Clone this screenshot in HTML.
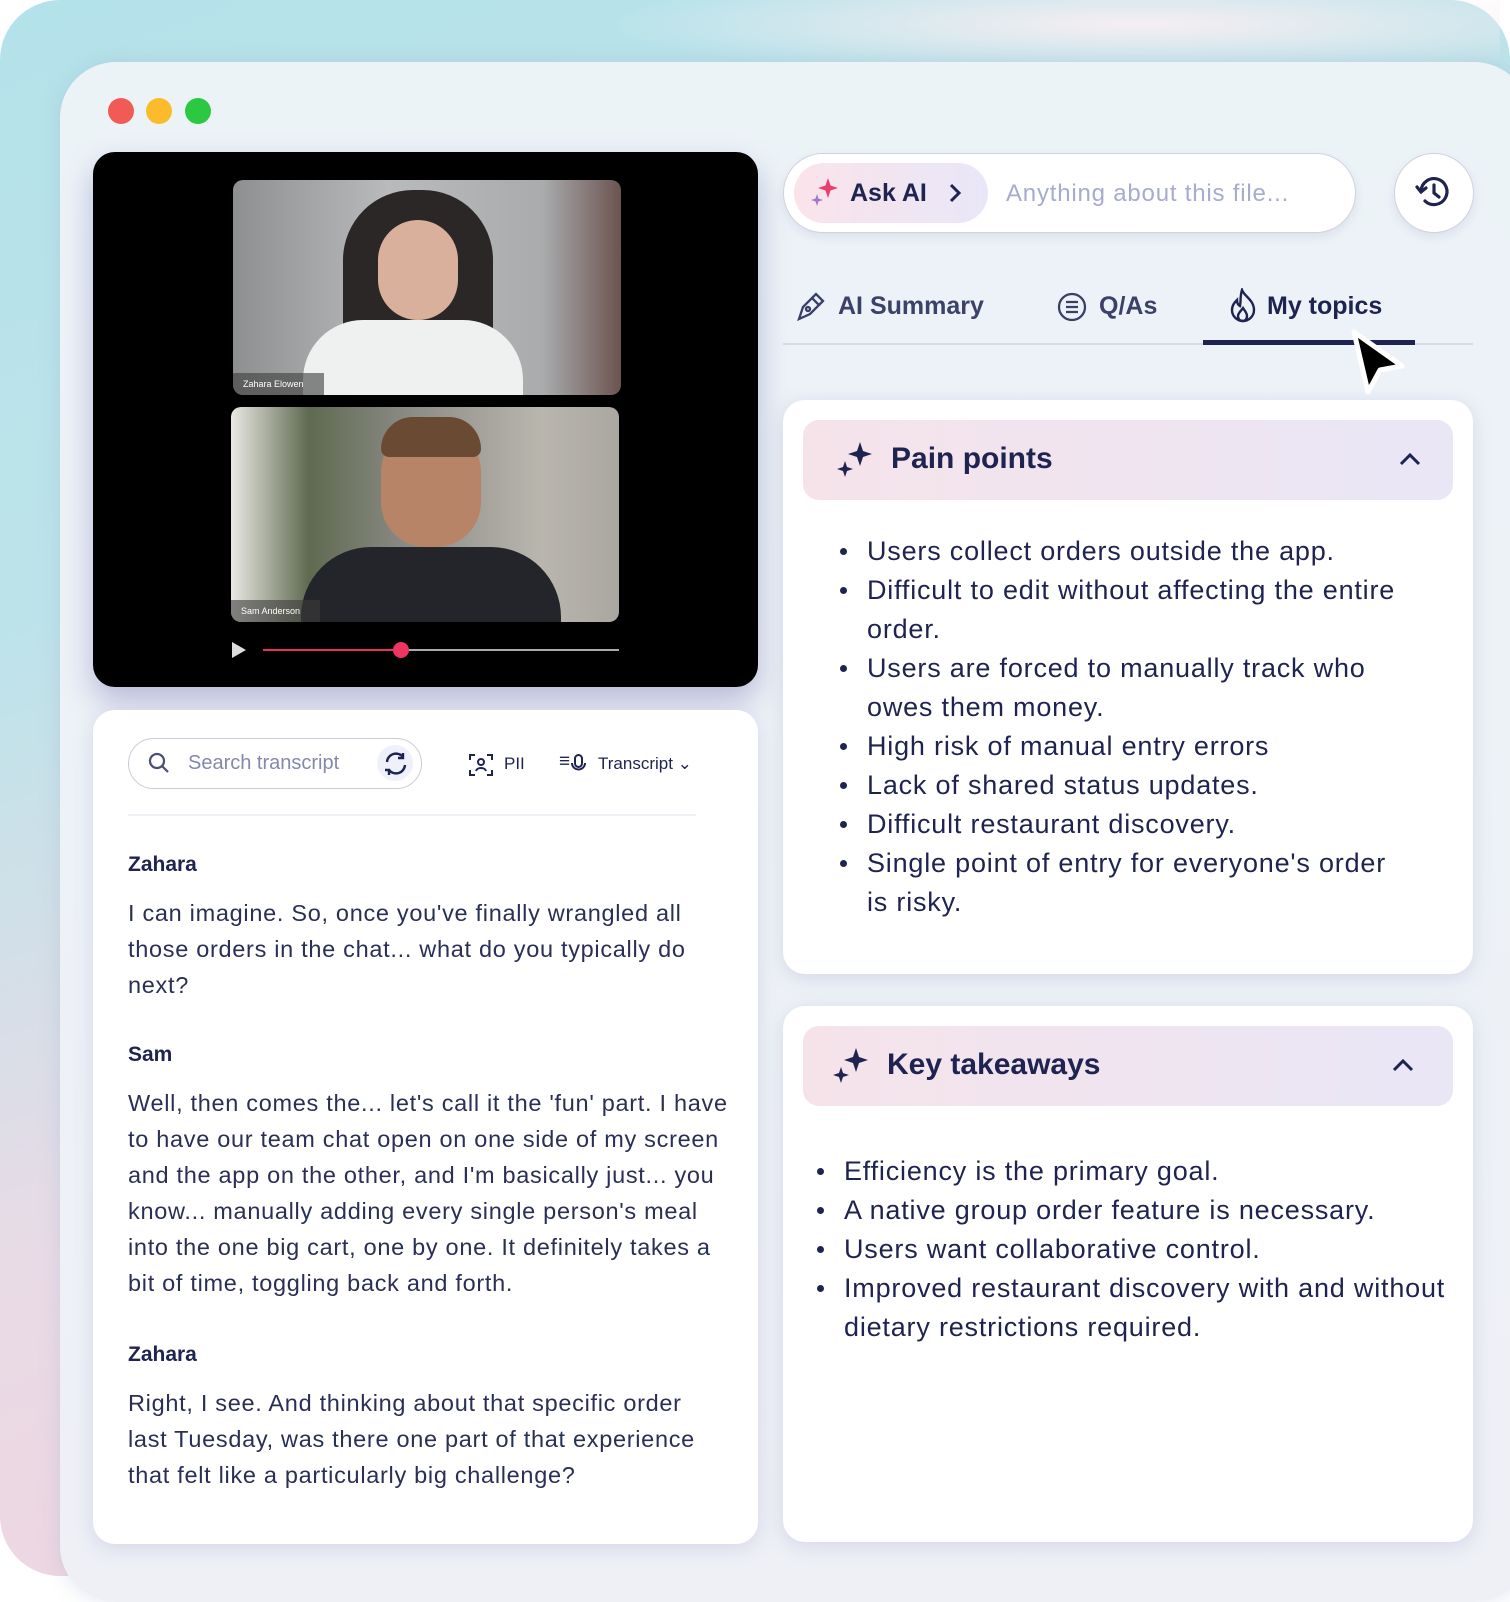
<!DOCTYPE html>
<html><head><meta charset="utf-8"><style>
*{box-sizing:border-box;margin:0;padding:0}
body{width:1510px;height:1576px;overflow:hidden;background:#fff;font-family:"Liberation Sans",sans-serif;color:#1e2350;position:relative}
.bg{position:absolute;left:0;top:0;width:1510px;height:1576px;border-radius:60px;background:linear-gradient(160deg,#b4e2ea 0%,#bde3ea 30%,#e9dbe6 60%,#f3cfd9 100%)}
.bg2{position:absolute;left:600px;top:0;width:900px;height:80px;background:radial-gradient(ellipse at 60% 30%,#f6eef2 0%,rgba(246,238,242,0) 70%)}
.win{position:absolute;left:60px;top:62px;width:1470px;height:1540px;border-radius:56px;background:linear-gradient(180deg,#ecf3f7,#eef0f6);box-shadow:0 0 20px rgba(150,170,200,.3)}
.dot{position:absolute;top:98px;width:26px;height:26px;border-radius:50%}
.abs{position:absolute}
.card{background:#fff;border-radius:22px;box-shadow:0 4px 18px rgba(140,140,190,.25)}
.video{left:93px;top:152px;width:665px;height:535px;background:#000;border-radius:22px;box-shadow:0 14px 30px rgba(120,120,180,.45)}
.ph{position:absolute;border-radius:10px;overflow:hidden}
.tag{position:absolute;left:0;bottom:0;background:rgba(60,60,60,.6);color:#fff;font-size:9px;padding:6px 20px 6px 10px}
.li{position:relative;padding-left:27px;margin-bottom:0}
.li:before{content:"";position:absolute;left:0;top:16px;width:7px;height:7px;border-radius:50%;background:#1e2350}
.hdr{position:absolute;left:20px;right:20px;top:20px;height:80px;border-radius:16px;background:linear-gradient(90deg,#f6e3ea,#e9e6f6)}
.hdr span{position:absolute;left:88px;top:22px;font-size:30px;font-weight:bold}
.tr p{font-size:23.5px;line-height:36px;color:#2a2f55;letter-spacing:.7px}
.tr h4{font-size:21px;font-weight:bold;margin:0 0 18px}
.list{font-size:27px;line-height:39px;letter-spacing:.8px}
</style></head><body>
<div class="bg"></div><div class="bg2"></div>
<div class="win"></div>
<div class="dot" style="left:108px;background:#f25a55"></div>
<div class="dot" style="left:146px;background:#fbbb2b"></div>
<div class="dot" style="left:185px;background:#2cc842"></div>

<div class="abs video">
 <div class="ph" style="left:140px;top:28px;width:388px;height:215px;background:linear-gradient(90deg,#8e8f91,#b8babb 40%,#a9abad 80%,#6b5450)">
  <div class="abs" style="left:110px;top:10px;width:150px;height:190px;border-radius:70px 70px 30px 30px;background:#2c2727"></div>
  <div class="abs" style="left:145px;top:40px;width:80px;height:100px;border-radius:40px;background:#d9b09c"></div>
  <div class="abs" style="left:70px;top:140px;width:220px;height:90px;border-radius:60px 60px 0 0;background:#eef1f0"></div>
  <div class="tag">Zahara Elowen</div>
 </div>
 <div class="ph" style="left:138px;top:255px;width:388px;height:215px;background:linear-gradient(90deg,#eae8e3,#5f6a50 20%,#8a8a84 45%,#b9b6ae 80%,#aaa7a0)">
  <div class="abs" style="left:150px;top:20px;width:100px;height:120px;border-radius:45px;background:#b88468"></div>
  <div class="abs" style="left:150px;top:10px;width:100px;height:40px;border-radius:40px 40px 10px 10px;background:#6b4a33"></div>
  <div class="abs" style="left:70px;top:140px;width:260px;height:90px;border-radius:70px 70px 0 0;background:#23252b"></div>
  <div class="tag">Sam Anderson</div>
 </div>
 <svg class="abs" style="left:136px;top:488px" width="20" height="20"><path d="M3 2 L17 10 L3 18Z" fill="#ddd"/></svg>
 <div class="abs" style="left:170px;top:497px;width:140px;height:2px;background:#e8335f"></div>
 <div class="abs" style="left:310px;top:497px;width:216px;height:2px;background:#aaa"></div>
 <div class="abs" style="left:300px;top:490px;width:16px;height:16px;border-radius:50%;background:#ee3461"></div>
</div>

<div class="abs card tr" style="left:93px;top:710px;width:665px;height:834px">
 <div class="abs" style="left:35px;top:28px;width:294px;height:51px;border:1.5px solid #c9cbd6;border-radius:26px">
  <svg class="abs" style="left:18px;top:12px" width="24" height="24" fill="none" stroke="#4a4f73" stroke-width="2.2"><circle cx="10" cy="10" r="7"/><path d="M15 15l6 6"/></svg>
  <span class="abs" style="left:59px;top:13px;font-size:20px;color:#8489ac">Search transcript</span>
  <div class="abs" style="left:248px;top:6px;width:36px;height:36px;border-radius:50%;background:#eef0fa"></div>
  <svg class="abs" style="left:254px;top:12px" width="26" height="26" fill="none" stroke="#1e2350" stroke-width="2.4"><path d="M4 11a9 9 0 0 1 16-5M22 14a9 9 0 0 1-16 5"/><path d="M20 2v5h-5M6 24v-5h-4"/></svg>
 </div>
 <svg class="abs" style="left:375px;top:42px" width="26" height="26" fill="none" stroke="#1e2350" stroke-width="2"><path d="M2 8V3h5M19 3h5v5M24 18v5h-5M7 23H2v-5"/><circle cx="13" cy="10" r="3"/><path d="M8 19c1-4 9-4 10 0"/></svg>
 <span class="abs" style="left:411px;top:44px;font-size:17px">PII</span>
 <span class="abs" style="left:466px;top:41px;font-size:19px;font-weight:bold">≡</span>
 <svg class="abs" style="left:478px;top:43px" width="16" height="22" fill="none" stroke="#1e2350" stroke-width="2"><rect x="4" y="2" width="7" height="12" rx="3.5"/><path d="M1 10a6.5 6.5 0 0 0 13 0"/></svg>
 <span class="abs" style="left:505px;top:44px;font-size:17px">Transcript ⌄</span>
 <div class="abs" style="left:35px;top:104px;width:568px;height:2px;background:#eef0f5"></div>
 <div class="abs" style="left:35px;top:143px;width:600px">
  <h4>Zahara</h4>
  <p>I can imagine. So, once you've finally wrangled all those orders in the chat... what do you typically do next?</p>
  <h4 style="margin-top:40px">Sam</h4>
  <p>Well, then comes the... let's call it the 'fun' part. I have to have our team chat open on one side of my screen and the app on the other, and I'm basically just... you know... manually adding every single person's meal into the one big cart, one by one. It definitely takes a bit of time, toggling back and forth.</p>
  <h4 style="margin-top:42px">Zahara</h4>
  <p>Right, I see. And thinking about that specific order last Tuesday, was there one part of that experience that felt like a particularly big challenge?</p>
 </div>
</div>

<!-- Ask AI -->
<div class="abs" style="left:783px;top:153px;width:573px;height:80px;border-radius:40px;background:#fff;border:1.5px solid #d0d3de;box-shadow:0 4px 10px rgba(150,150,190,.2)"></div>
<div class="abs" style="left:794px;top:163px;width:194px;height:60px;border-radius:30px;background:linear-gradient(90deg,#fbe3ea,#e8e7f8)"></div>
<svg class="abs" style="left:808px;top:176px" width="34" height="34"><path d="M20 2l2.5 7.5 7.5 2.5-7.5 2.5L20 22l-2.5-7.5L10 12l7.5-2.5z" fill="#e8406c"/><path d="M9 18l1.5 4.5L15 24l-4.5 1.5L9 30l-1.5-4.5L3 24l4.5-1.5z" fill="#a07ac8"/></svg>
<span class="abs" style="left:850px;top:179px;font-size:25px;font-weight:bold">Ask AI</span>
<svg class="abs" style="left:946px;top:182px" width="18" height="22" fill="none" stroke="#1e2350" stroke-width="3"><path d="M5 3l8 8-8 8"/></svg>
<span class="abs" style="left:1006px;top:180px;font-size:24px;letter-spacing:.8px;color:#a6abd0">Anything about this file...</span>
<div class="abs" style="left:1394px;top:153px;width:80px;height:80px;border-radius:50%;background:#fff;border:1.5px solid #d0d3de;box-shadow:0 4px 10px rgba(150,150,190,.2)"></div>
<svg class="abs" style="left:1414px;top:173px" width="40" height="40" fill="none" stroke="#1e2350" stroke-width="3.2" stroke-linecap="round"><path d="M7 18a13 13 0 1 1 4 10"/><path d="M3 14l4 5 5-4"/><path d="M20 12v8l5 4"/></svg>

<!-- tabs -->
<svg class="abs" style="left:795px;top:290px" width="32" height="32" fill="none" stroke="#3a3f6a" stroke-width="2.3"><path d="M4 29l4-12 9-9 7 7-9 9z"/><path d="M17 8l4-4 7 7-4 4"/><circle cx="13" cy="19" r="2"/></svg>
<span class="abs" style="left:838px;top:292px;font-size:25px;font-weight:bold;color:#3c4168">AI Summary</span>
<svg class="abs" style="left:1056px;top:291px" width="32" height="32" fill="none" stroke="#3a3f6a" stroke-width="2.3"><circle cx="16" cy="16" r="13"/><path d="M10 11h12M10 16h12M10 21h12"/></svg>
<span class="abs" style="left:1099px;top:292px;font-size:25px;font-weight:bold;color:#3c4168">Q/As</span>
<svg class="abs" style="left:1228px;top:288px" width="30" height="36" fill="none" stroke="#1e2350" stroke-width="2.4"><path d="M14 2c2 6 12 10 12 20a11 11 0 0 1-22 0c0-5 3-8 5-10 0 3 1 5 3 6 1-5 0-10 2-16z"/><path d="M15 33c-3 0-5-2-5-5 0-3 3-5 5-8 2 3 4 5 4 8s-2 5-4 5z"/></svg>
<span class="abs" style="left:1267px;top:292px;font-size:25px;font-weight:bold">My topics</span>
<div class="abs" style="left:783px;top:343px;width:690px;height:1.5px;background:#d8dbe5"></div>
<div class="abs" style="left:1203px;top:340px;width:212px;height:5px;background:#1e2350"></div>
<svg class="abs" style="left:1346px;top:326px" width="64" height="74"><path d="M8 6L56 40 34 44 22 66z" fill="#000" stroke="#fff" stroke-width="5" stroke-linejoin="round"/></svg>

<!-- Pain points -->
<div class="abs card" style="left:783px;top:400px;width:690px;height:574px">
 <div class="hdr"><svg class="abs" style="left:32px;top:20px" width="40" height="40"><path d="M25 2l3 9 9 3-9 3-3 9-3-9-9-3 9-3z" fill="#1e2350"/><path d="M10 21l2 6 6 2-6 2-2 6-2-6-6-2 6-2z" fill="#1e2350"/></svg><span>Pain points</span>
 <svg class="abs" style="left:595px;top:30px" width="24" height="18" fill="none" stroke="#1e2350" stroke-width="3"><path d="M3 14l9-9 9 9"/></svg></div>
 <div class="abs list" style="left:57px;top:132px;width:575px">
  <div class="li">Users collect orders outside the app.</div>
  <div class="li">Difficult to edit without affecting the entire order.</div>
  <div class="li">Users are forced to manually track who owes them money.</div>
  <div class="li">High risk of manual entry errors</div>
  <div class="li">Lack of shared status updates.</div>
  <div class="li">Difficult restaurant discovery.</div>
  <div class="li">Single point of entry for everyone's order is risky.</div>
 </div>
</div>

<!-- Key takeaways -->
<div class="abs card" style="left:783px;top:1006px;width:690px;height:536px">
 <div class="hdr"><svg class="abs" style="left:28px;top:20px" width="40" height="40"><path d="M25 2l3 9 9 3-9 3-3 9-3-9-9-3 9-3z" fill="#1e2350"/><path d="M10 21l2 6 6 2-6 2-2 6-2-6-6-2 6-2z" fill="#1e2350"/></svg><span style="left:84px">Key takeaways</span>
 <svg class="abs" style="left:588px;top:30px" width="24" height="18" fill="none" stroke="#1e2350" stroke-width="3"><path d="M3 14l9-9 9 9"/></svg></div>
 <div class="abs list" style="left:34px;top:146px;width:650px">
  <div class="li">Efficiency is the primary goal.</div>
  <div class="li">A native group order feature is necessary.</div>
  <div class="li">Users want collaborative control.</div>
  <div class="li">Improved restaurant discovery with and without dietary restrictions required.</div>
 </div>
</div>
</body></html>
